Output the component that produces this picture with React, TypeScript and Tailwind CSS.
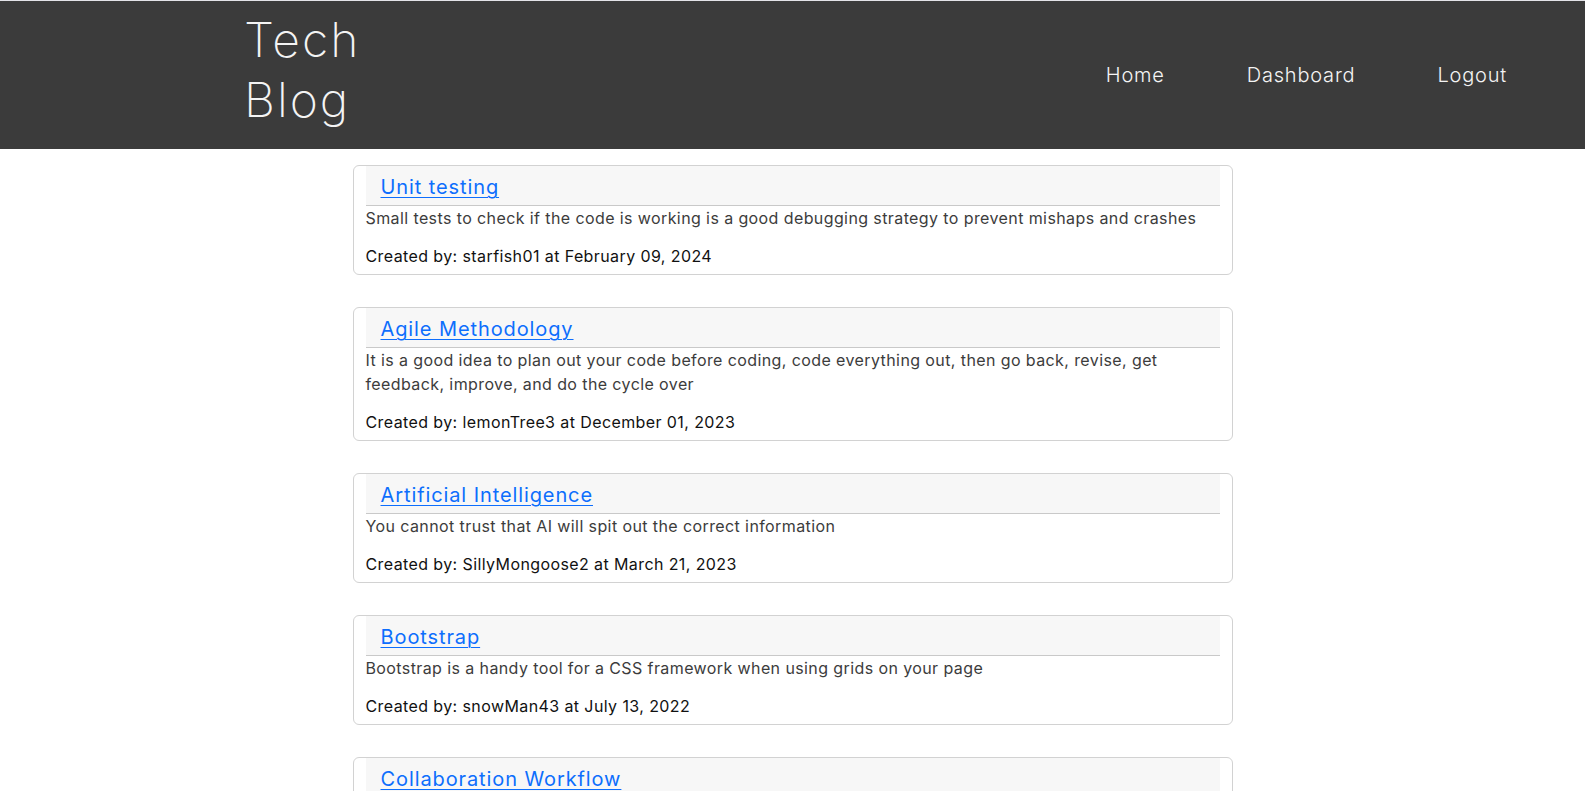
import React from "react";

type Post = {
  id: number;
  title: string;
  body: string;
  author: string;
  date: string;
};

const posts: Post[] = [
  {
    id: 1,
    title: "Unit testing",
    body: "Small tests to check if the code is working is a good debugging strategy to prevent mishaps and crashes",
    author: "starfish01",
    date: "February 09, 2024",
  },
  {
    id: 2,
    title: "Agile Methodology",
    body: "It is a good idea to plan out your code before coding, code everything out, then go back, revise, get feedback, improve, and do the cycle over",
    author: "lemonTree3",
    date: "December 01, 2023",
  },
  {
    id: 3,
    title: "Artificial Intelligence",
    body: "You cannot trust that AI will spit out the correct information",
    author: "SillyMongoose2",
    date: "March 21, 2023",
  },
  {
    id: 4,
    title: "Bootstrap",
    body: "Bootstrap is a handy tool for a CSS framework when using grids on your page",
    author: "snowMan43",
    date: "July 13, 2022",
  },
  {
    id: 5,
    title: "Collaboration Workflow",
    body: "Working on separate branches and opening pull requests keeps a team's code in sync",
    author: "starfish01",
    date: "June 02, 2022",
  },
];

function PostCard({ post }: { post: Post }) {
  return (
    <article className="rounded-[6px] border border-[#d2d2d2] bg-white px-[12px] pb-[6px]">
      <div className="h-[40px] border-b border-[#c9c9c9] bg-[#f7f7f7] pl-[15px] pt-[9px]">
        <a
          href="#"
          className="text-[20px] leading-[24px] tracking-[0.9px] text-[#0d6efd] underline underline-offset-[3px] decoration-1"
        >
          {post.title}
        </a>
      </div>
      <p className="text-[16px] leading-[24px] tracking-[0.4px] text-[#3c3c3c]">{post.body}</p>
      <p className="mt-[14px] text-[16px] font-normal leading-[24px] tracking-[0.4px] text-[#111]">
        Created by: {post.author} at {post.date}
      </p>
    </article>
  );
}

export default function App() {
  return (
    <div className="min-h-screen border-t border-[#e3e3e8] bg-white font-['Inter','Open_Sans',sans-serif]">
      {/* Header */}
      <header className="flex h-[148px] items-start bg-[#3b3b3b] text-[#f4f4f4]">
        <h1 className="ml-[244px] w-min pt-[9px] text-[48px] font-extralight leading-[60px] tracking-[2px]">
          Tech Blog
        </h1>
        <nav className="ml-auto mr-[78px] flex h-full items-center gap-[82px] text-[20px] font-light tracking-[0.8px]">
          <a href="#">Home</a>
          <a href="#">Dashboard</a>
          <a href="#">Logout</a>
        </nav>
      </header>

      {/* Posts */}
      <main className="mx-auto flex w-[880px] flex-col gap-[32px] pt-[16px] pb-10">
        {posts.map((post) => (
          <PostCard key={post.id} post={post} />
        ))}
      </main>
    </div>
  );
}
